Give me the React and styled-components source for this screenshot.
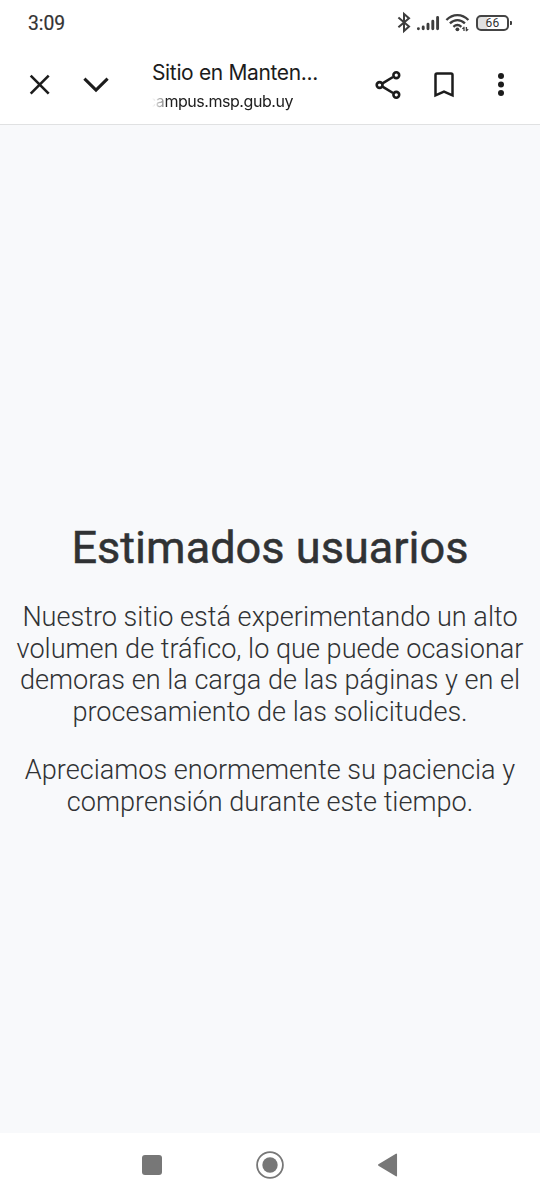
import styled, {createGlobalStyle} from 'styled-components';

const GlobalStyle = createGlobalStyle`
  * {
    box-sizing: border-box;
  }

  body {
    margin: 0;
    background: #ffffff;
    font-family: Roboto, sans-serif;
  }
`;

const Screen = styled.div`
  display: flex;
  flex-direction: column;
  width: 540px;
  height: 1200px;
  overflow: hidden;
`;

const StatusBar = styled.div`
  display: flex;
  justify-content: space-between;
  align-items: center;
  height: 46px;
  padding: 0 31px 0 28px;
`;

const Clock = styled.span`
  padding-top: 1px;
  color: #333333;
  font-size: 19.3px;
  font-weight: 400;
  line-height: 22px;
  -webkit-text-stroke: 0.2px #333333;
`;

const StatusIcons = styled.div`
  display: flex;
  align-items: center;
  gap: 6px;
`;

const Icon = styled.svg`
  display: block;
  flex: none;
  overflow: visible;
`;

const Battery = styled.div`
  position: relative;
  display: flex;
  align-items: center;
  justify-content: center;
  width: 33px;
  height: 16px;
  margin-top: -1px;
  border: 2px solid #444444;
  border-radius: 5px;
  background: linear-gradient(90deg, #e2e2e2 30%, #ffffff 34%);
  color: #333333;
  font-size: 12px;
  font-weight: 400;
  line-height: 14px;
  letter-spacing: 0.2px;

  &::after {
    content: '';
    position: absolute;
    right: -5px;
    top: 4px;
    width: 2px;
    height: 4px;
    border-radius: 0 1px 1px 0;
    background: #3d3d3d;
  }
`;

const Toolbar = styled.header`
  display: flex;
  height: 79px;
  padding-left: 28px;
  border-bottom: 1px solid #e0e1e2;
`;

const ToolbarButton = styled.button`
  display: flex;
  flex: none;
  align-items: center;
  justify-content: center;
  width: ${({$width}) => $width}px;
  height: 77px;
  padding: 0;
  border: none;
  background: none;
  color: #1c1c1c;
`;

const PageInfo = styled.div`
  flex: none;
  width: 209px;
  margin-left: 11px;
  padding-top: 13px;
  font-family: Inter, sans-serif;
`;

const PageTitle = styled.div`
  color: #1c1c1c;
  font-size: 21px;
  line-height: 28px;
  letter-spacing: -0.35px;
  white-space: nowrap;
`;

const PageHost = styled.div`
  width: max-content;
  margin: 3px 0 0 -5px;
  color: #202020;
  font-size: 16px;
  line-height: 22px;
  letter-spacing: -0.45px;
  white-space: nowrap;
  mask-image: linear-gradient(90deg, transparent 5px, rgba(0, 0, 0, 0.4) 14px, rgba(0, 0, 0, 0.5) 17px, #000 19px);
`;

const Content = styled.main`
  height: 1008px;
  padding-top: 395px;
  background: #f8f9fb;
  color: #303234;
  text-align: center;
`;

const Heading = styled.h1`
  margin: 0 0 26px;
  font-size: 45.1px;
  font-weight: 400;
  line-height: 56px;
  white-space: nowrap;
  -webkit-text-stroke: 0.5px #303234;
`;

const Message = styled.p`
  margin: 0 0 27px;
  font-size: 27.1px;
  font-weight: 300;
  line-height: 31.5px;
  white-space: nowrap;
`;

const NavBar = styled.nav`
  display: flex;
  align-items: center;
  justify-content: center;
  gap: 90px;
  height: 67px;
  padding-bottom: 4px;
`;

function Bluetooth() {
    return (
        <Icon width="13" height="20" viewBox="0 0 13 20" fill="none" stroke="#3d3d3d" strokeWidth="2">
            <path d="M1.4 4.6L12 13.6L7 18V1L12 5.2L1.4 14.2"/>
        </Icon>
    );
}

function Signal() {
    return (
        <Icon width="24" height="16" viewBox="0 0 24 16" stroke="#3d3d3d" strokeWidth="2.9" strokeLinecap="round">
            <path d="M2.4 13.6V13.8M7.2 12V13.8M12 9.3V13.8M16.8 6.3V13.8M21.6 2.4V13.8"/>
        </Icon>
    );
}

function Wifi() {
    return (
        <Icon width="24" height="18" viewBox="0 0 24 18" fill="none" stroke="#3d3d3d" strokeWidth="2.3">
            <path d="M.4 6C6.8-.5 16-.5 22.4 6M3.9 9.4C8.4 5 14.4 5 18.9 9.4M7.4 12.8C9.9 10.5 12.9 10.5 15.4 12.8"/>
            <circle cx="11.4" cy="15.3" r="1.9" fill="#3d3d3d" stroke="none"/>
            <path d="M18 12.7V16.9M16.4 14.9L18.2 13.1M20.4 17.3V13.1M20.4 16.9L22.2 15.1" strokeWidth="1.3"/>
        </Icon>
    );
}

function Close() {
    return (
        <Icon width="22" height="22" viewBox="0 0 22 22" stroke="currentColor" strokeWidth="2.6">
            <path d="M1.7 1.7L19.7 19.7M19.7 1.7L1.7 19.7"/>
        </Icon>
    );
}

function Chevron() {
    return (
        <Icon width="26" height="16" viewBox="0 0 26 16" fill="none" stroke="currentColor" strokeWidth="3.1">
            <path d="M1.4 1.6L13 13L24.6 1.6"/>
        </Icon>
    );
}

function Share() {
    return (
        <Icon width="26" height="28" viewBox="0 0 26 28" fill="none" stroke="currentColor" strokeWidth="2.6">
            <path d="M7.5 12.4L18 6M7.5 15.6L18 22"/>
            <circle cx="4.6" cy="14" r="2.9"/>
            <circle cx="21.3" cy="4.2" r="2.9"/>
            <circle cx="21.3" cy="23.8" r="2.9"/>
        </Icon>
    );
}

function Bookmark() {
    return (
        <Icon width="20" height="26" viewBox="0 0 20 26" fill="none" stroke="currentColor" strokeWidth="2.5">
            <path d="M1.5 23.4V3Q1.5 1.5 3 1.5H17Q18.5 1.5 18.5 3V23.4L10 19.7Z"/>
        </Icon>
    );
}

function More() {
    return (
        <Icon width="6" height="24" viewBox="0 0 6 24" fill="currentColor">
            <circle cx="3" cy="3.1" r="3"/>
            <circle cx="3" cy="11.6" r="3"/>
            <circle cx="3" cy="20.1" r="3"/>
        </Icon>
    );
}

function App() {
    return (
        <Screen>
            <GlobalStyle/>
            <StatusBar>
                <Clock>3:09</Clock>
                <StatusIcons>
                    <Bluetooth/>
                    <Signal/>
                    <Wifi/>
                    <Battery>66</Battery>
                </StatusIcons>
            </StatusBar>
            <Toolbar>
                <ToolbarButton $width={23} aria-label="Cerrar"><Close/></ToolbarButton>
                <ToolbarButton $width={90} aria-label="Minimizar"><Chevron/></ToolbarButton>
                <PageInfo>
                    <PageTitle>Sitio en Manten...</PageTitle>
                    <PageHost>campus.msp.gub.uy</PageHost>
                </PageInfo>
                <ToolbarButton $width={54} aria-label="Compartir"><Share/></ToolbarButton>
                <ToolbarButton $width={58} aria-label="Guardar"><Bookmark/></ToolbarButton>
                <ToolbarButton $width={56} aria-label="Más opciones"><More/></ToolbarButton>
            </Toolbar>
            <Content>
                <Heading>Estimados usuarios</Heading>
                <Message>
                    Nuestro sitio está experimentando un alto<br/>
                    volumen de tráfico, lo que puede ocasionar<br/>
                    demoras en la carga de las páginas y en el<br/>
                    procesamiento de las solicitudes.
                </Message>
                <Message>
                    Apreciamos enormemente su paciencia y<br/>
                    comprensión durante este tiempo.
                </Message>
            </Content>
            <NavBar>
                <Icon width="28" height="28" viewBox="0 0 28 28" fill="#777777">
                    <rect x="4" y="4" width="20" height="20" rx="3"/>
                </Icon>
                <Icon width="28" height="28" viewBox="0 0 28 28" fill="#777777">
                    <circle cx="14" cy="14" r="12.9" fill="none" stroke="#777777" strokeWidth="1.8"/>
                    <circle cx="14" cy="14" r="7.7"/>
                </Icon>
                <Icon width="28" height="28" viewBox="0 0 28 28" fill="#777777" stroke="#777777" strokeLinejoin="round">
                    <path d="M4.8 14L22.3 3.3V24.7Z" strokeWidth="1.5"/>
                </Icon>
            </NavBar>
        </Screen>
    );
}

export default App;
